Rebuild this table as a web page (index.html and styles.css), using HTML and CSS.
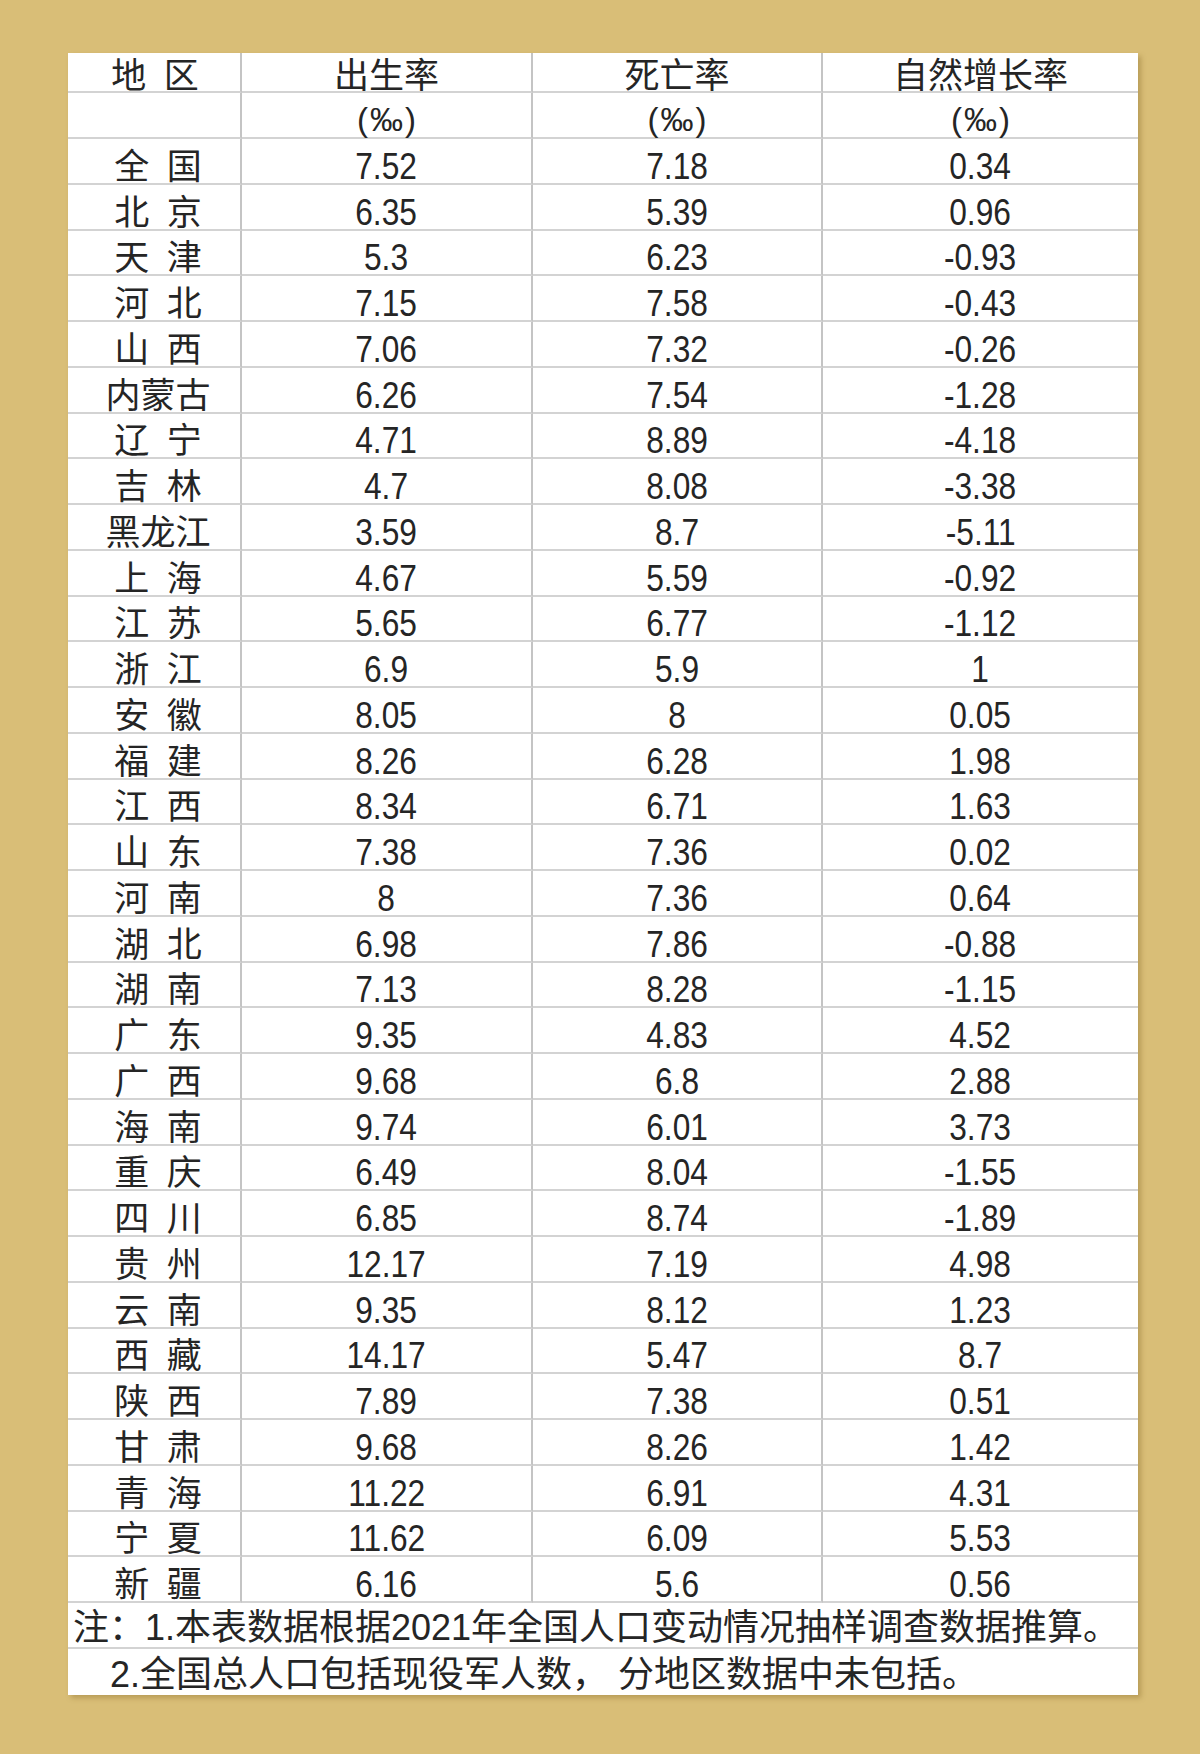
FILE: index.html
```html
<!DOCTYPE html>
<html lang="zh-CN">
<head>
<meta charset="utf-8">
<title>2021年各地区人口出生率、死亡率和自然增长率</title>
<link rel="stylesheet" href="styles.css">
</head>
<body>
<div class="sheet">
  <div class="row head">
    <div class="c reg-h"><span class="zh">地&ensp;区</span></div>
    <div class="c"><span class="zh">出生率</span></div>
    <div class="c"><span class="zh">死亡率</span></div>
    <div class="c"><span class="zh">自然增长率</span></div>
  </div>
  <div class="row sub">
    <div class="c"></div>
    <div class="c"><span class="unit">(‰)</span></div>
    <div class="c"><span class="unit">(‰)</span></div>
    <div class="c"><span class="unit">(‰)</span></div>
  </div>
  <div class="row"><div class="c reg"><span class="zh">全&ensp;国</span></div><div class="c"><span class="n">7.52</span></div><div class="c"><span class="n">7.18</span></div><div class="c"><span class="n">0.34</span></div></div>
  <div class="row"><div class="c reg"><span class="zh">北&ensp;京</span></div><div class="c"><span class="n">6.35</span></div><div class="c"><span class="n">5.39</span></div><div class="c"><span class="n">0.96</span></div></div>
  <div class="row"><div class="c reg"><span class="zh">天&ensp;津</span></div><div class="c"><span class="n">5.3</span></div><div class="c"><span class="n">6.23</span></div><div class="c"><span class="n">-0.93</span></div></div>
  <div class="row"><div class="c reg"><span class="zh">河&ensp;北</span></div><div class="c"><span class="n">7.15</span></div><div class="c"><span class="n">7.58</span></div><div class="c"><span class="n">-0.43</span></div></div>
  <div class="row"><div class="c reg"><span class="zh">山&ensp;西</span></div><div class="c"><span class="n">7.06</span></div><div class="c"><span class="n">7.32</span></div><div class="c"><span class="n">-0.26</span></div></div>
  <div class="row"><div class="c reg"><span class="zh">内蒙古</span></div><div class="c"><span class="n">6.26</span></div><div class="c"><span class="n">7.54</span></div><div class="c"><span class="n">-1.28</span></div></div>
  <div class="row"><div class="c reg"><span class="zh">辽&ensp;宁</span></div><div class="c"><span class="n">4.71</span></div><div class="c"><span class="n">8.89</span></div><div class="c"><span class="n">-4.18</span></div></div>
  <div class="row"><div class="c reg"><span class="zh">吉&ensp;林</span></div><div class="c"><span class="n">4.7</span></div><div class="c"><span class="n">8.08</span></div><div class="c"><span class="n">-3.38</span></div></div>
  <div class="row"><div class="c reg"><span class="zh">黑龙江</span></div><div class="c"><span class="n">3.59</span></div><div class="c"><span class="n">8.7</span></div><div class="c"><span class="n">-5.11</span></div></div>
  <div class="row"><div class="c reg"><span class="zh">上&ensp;海</span></div><div class="c"><span class="n">4.67</span></div><div class="c"><span class="n">5.59</span></div><div class="c"><span class="n">-0.92</span></div></div>
  <div class="row"><div class="c reg"><span class="zh">江&ensp;苏</span></div><div class="c"><span class="n">5.65</span></div><div class="c"><span class="n">6.77</span></div><div class="c"><span class="n">-1.12</span></div></div>
  <div class="row"><div class="c reg"><span class="zh">浙&ensp;江</span></div><div class="c"><span class="n">6.9</span></div><div class="c"><span class="n">5.9</span></div><div class="c"><span class="n">1</span></div></div>
  <div class="row"><div class="c reg"><span class="zh">安&ensp;徽</span></div><div class="c"><span class="n">8.05</span></div><div class="c"><span class="n">8</span></div><div class="c"><span class="n">0.05</span></div></div>
  <div class="row"><div class="c reg"><span class="zh">福&ensp;建</span></div><div class="c"><span class="n">8.26</span></div><div class="c"><span class="n">6.28</span></div><div class="c"><span class="n">1.98</span></div></div>
  <div class="row"><div class="c reg"><span class="zh">江&ensp;西</span></div><div class="c"><span class="n">8.34</span></div><div class="c"><span class="n">6.71</span></div><div class="c"><span class="n">1.63</span></div></div>
  <div class="row"><div class="c reg"><span class="zh">山&ensp;东</span></div><div class="c"><span class="n">7.38</span></div><div class="c"><span class="n">7.36</span></div><div class="c"><span class="n">0.02</span></div></div>
  <div class="row"><div class="c reg"><span class="zh">河&ensp;南</span></div><div class="c"><span class="n">8</span></div><div class="c"><span class="n">7.36</span></div><div class="c"><span class="n">0.64</span></div></div>
  <div class="row"><div class="c reg"><span class="zh">湖&ensp;北</span></div><div class="c"><span class="n">6.98</span></div><div class="c"><span class="n">7.86</span></div><div class="c"><span class="n">-0.88</span></div></div>
  <div class="row"><div class="c reg"><span class="zh">湖&ensp;南</span></div><div class="c"><span class="n">7.13</span></div><div class="c"><span class="n">8.28</span></div><div class="c"><span class="n">-1.15</span></div></div>
  <div class="row"><div class="c reg"><span class="zh">广&ensp;东</span></div><div class="c"><span class="n">9.35</span></div><div class="c"><span class="n">4.83</span></div><div class="c"><span class="n">4.52</span></div></div>
  <div class="row"><div class="c reg"><span class="zh">广&ensp;西</span></div><div class="c"><span class="n">9.68</span></div><div class="c"><span class="n">6.8</span></div><div class="c"><span class="n">2.88</span></div></div>
  <div class="row"><div class="c reg"><span class="zh">海&ensp;南</span></div><div class="c"><span class="n">9.74</span></div><div class="c"><span class="n">6.01</span></div><div class="c"><span class="n">3.73</span></div></div>
  <div class="row"><div class="c reg"><span class="zh">重&ensp;庆</span></div><div class="c"><span class="n">6.49</span></div><div class="c"><span class="n">8.04</span></div><div class="c"><span class="n">-1.55</span></div></div>
  <div class="row"><div class="c reg"><span class="zh">四&ensp;川</span></div><div class="c"><span class="n">6.85</span></div><div class="c"><span class="n">8.74</span></div><div class="c"><span class="n">-1.89</span></div></div>
  <div class="row"><div class="c reg"><span class="zh">贵&ensp;州</span></div><div class="c"><span class="n">12.17</span></div><div class="c"><span class="n">7.19</span></div><div class="c"><span class="n">4.98</span></div></div>
  <div class="row"><div class="c reg"><span class="zh">云&ensp;南</span></div><div class="c"><span class="n">9.35</span></div><div class="c"><span class="n">8.12</span></div><div class="c"><span class="n">1.23</span></div></div>
  <div class="row"><div class="c reg"><span class="zh">西&ensp;藏</span></div><div class="c"><span class="n">14.17</span></div><div class="c"><span class="n">5.47</span></div><div class="c"><span class="n">8.7</span></div></div>
  <div class="row"><div class="c reg"><span class="zh">陕&ensp;西</span></div><div class="c"><span class="n">7.89</span></div><div class="c"><span class="n">7.38</span></div><div class="c"><span class="n">0.51</span></div></div>
  <div class="row"><div class="c reg"><span class="zh">甘&ensp;肃</span></div><div class="c"><span class="n">9.68</span></div><div class="c"><span class="n">8.26</span></div><div class="c"><span class="n">1.42</span></div></div>
  <div class="row"><div class="c reg"><span class="zh">青&ensp;海</span></div><div class="c"><span class="n">11.22</span></div><div class="c"><span class="n">6.91</span></div><div class="c"><span class="n">4.31</span></div></div>
  <div class="row"><div class="c reg"><span class="zh">宁&ensp;夏</span></div><div class="c"><span class="n">11.62</span></div><div class="c"><span class="n">6.09</span></div><div class="c"><span class="n">5.53</span></div></div>
  <div class="row"><div class="c reg"><span class="zh">新&ensp;疆</span></div><div class="c"><span class="n">6.16</span></div><div class="c"><span class="n">5.6</span></div><div class="c"><span class="n">0.56</span></div></div>
  <div class="note note1">注：1.本表数据根据2021年全国人口变动情况抽样调查数据推算。</div>
  <div class="note note2">2.全国总人口包括现役军人数， 分地区数据中未包括。</div>
</div>
</body>
</html>
```
FILE: styles.css
```css
html, body {
  margin: 0;
  padding: 0;
}
body {
  background: #d9be77;
  min-height: 1754px;
  padding-top: 53px;
  padding-left: 68px;
  box-sizing: border-box;
  color: #252525;
}
.sheet {
  width: 1070px;
  background: #ffffff;
  box-shadow: 3px 3px 5px rgba(120, 92, 30, 0.35);
  display: flex;
  flex-direction: column;
}
.row {
  display: grid;
  grid-template-columns: 174px 291px 290px 315px;
  height: 45.75px;
}
.row.head {
  height: 40px;
}
.row.sub {
  height: 46px;
}
.c {
  box-sizing: border-box;
  display: flex;
  justify-content: center;
  align-items: flex-end;
  border-bottom: 2px solid #d3d3d3;
  border-right: 2px solid #c4c4c4;
  padding-bottom: 0;
}
.c:last-child {
  border-right: none;
}
.reg {
  padding-left: 8px;
}
.reg-h {
  padding-left: 2px;
}
.zh {
  font-family: "Liberation Sans", "Noto Sans CJK SC", sans-serif;
  font-size: 35px;
  line-height: 33px;
  white-space: pre;
}
.head .zh {
  line-height: 31px;
}
.n {
  display: inline-block;
  font-family: "Liberation Sans", Arial, sans-serif;
  font-size: 36px;
  line-height: 32px;
  transform: scaleX(0.88);
  white-space: nowrap;
}
.unit {
  font-family: "Liberation Sans", Arial, sans-serif;
  font-size: 33px;
  line-height: 1;
  letter-spacing: 2px;
  padding-left: 2px;
}
.sub .c {
  padding-bottom: 1px;
}
.note {
  box-sizing: border-box;
  height: 46px;
  display: flex;
  align-items: flex-end;
  font-family: "Liberation Sans", "Noto Sans CJK SC", sans-serif;
  font-size: 36px;
  line-height: 36px;
  white-space: pre;
}
.note1 {
  border-bottom: 2px solid #d3d3d3;
  padding-left: 5px;
  padding-bottom: 1px;
}
.note2 {
  padding-left: 42px;
  padding-bottom: 2px;
}
```
